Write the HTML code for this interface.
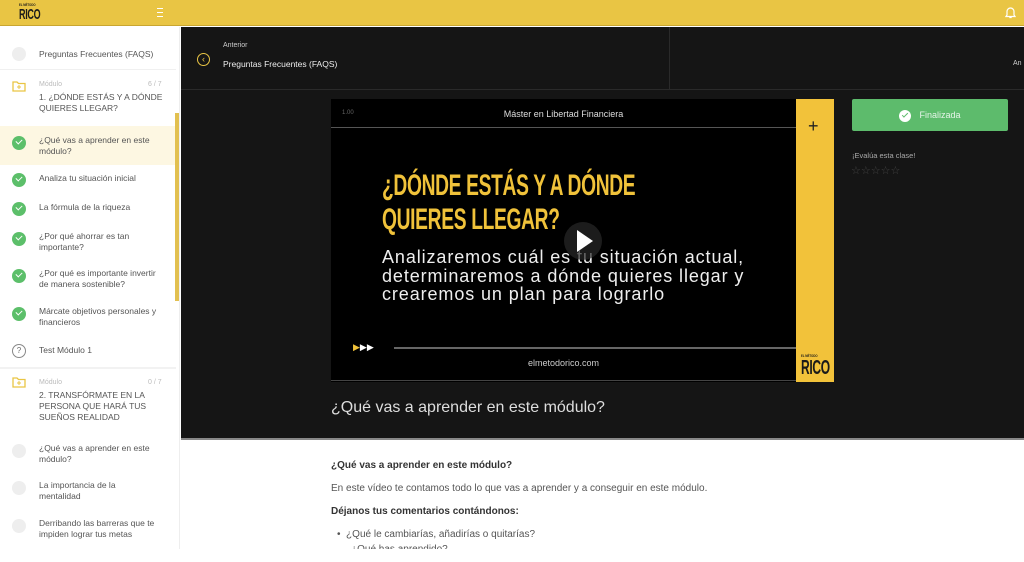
<!DOCTYPE html>
<html><head><meta charset="utf-8"><style>
*{margin:0;padding:0;box-sizing:border-box}
body{width:1024px;height:562px;overflow:hidden;background:#fff;font-family:"Liberation Sans",sans-serif;position:relative}
.top{position:absolute;left:0;top:0;width:1024px;height:26px;background:#e9c544;border-bottom:1px solid #c9a630}
.logo{position:absolute;left:19px;top:3px;color:#1a1a1a;font-weight:bold;line-height:1}
.side{position:absolute;left:0;top:27px;width:180px;height:522px;background:#fff;border-right:1px solid #eee}
.it{position:absolute;left:0;width:176px;font-size:8.5px;color:#555;line-height:11px}
.it span{position:absolute;left:39px;width:126px}
.ic{position:absolute;left:12px;width:14px;height:14px;border-radius:50%}
.ok{background:#5cbf6a}
.ok::after{content:"";position:absolute;left:4px;top:3px;width:5px;height:3px;border-left:1.6px solid #fff;border-bottom:1.6px solid #fff;transform:rotate(-45deg)}
.gr{background:#eee}
.main{position:absolute;left:181px;top:27px;width:843px;height:411px;background:#151515}
.sep{position:absolute;background:#2a2a2a}
.content{position:absolute;left:331px;top:455px;font-size:10px;color:#333}
.rlogo{font-weight:bold;line-height:1;color:#1a1a1a}
.rlogo b{display:block;font-size:15px;transform:scaleX(.6);transform-origin:left;letter-spacing:-.5px}
.rlogo i{display:block;font-style:normal;font-size:4px;transform:scaleX(.7);transform-origin:left}
</style></head><body>
<div class="top">
 <div class="logo rlogo"><i>EL MÉTODO</i><b>RICO</b></div>
 <div style="position:absolute;left:157px;top:8px;width:6px;height:9px;border-top:1.5px solid #fff;border-bottom:1.5px solid #fff"><div style="margin-top:2.5px;height:1.5px;background:#fff"></div></div>
 <svg style="position:absolute;left:1005px;top:6px" width="11" height="13" viewBox="0 0 11 13"><path d="M2 9V5.5a3.5 3.5 0 017 0V9l1 1.5H1z M4.3 11.5h2.4" fill="none" stroke="#fff" stroke-width="1.2"/></svg>
</div>
<div class="side">
 <div class="it" style="top:18px"><div class="ic gr" style="top:2px"></div><span style="top:4px;width:140px">Preguntas Frecuentes (FAQS)</span></div>
 <div style="position:absolute;left:0;top:42px;width:176px;height:1px;background:#f0f0f0"></div>
 <svg style="position:absolute;left:12px;top:53px" width="14" height="12"><path d="M1 2h4l1.5 1.5H13V11H1z" fill="none" stroke="#e9c544" stroke-width="1.3"/><path d="M7 5v4M5 7h4" stroke="#e9c544" stroke-width="1"/></svg>
 <div style="position:absolute;left:39px;top:54px;font-size:7px;color:#bbb">Módulo</div>
 <div style="position:absolute;left:148px;top:54px;font-size:7px;color:#bbb">6 / 7</div>
 <div class="it" style="top:65px"><span>1. ¿DÓNDE ESTÁS Y A DÓNDE QUIERES LLEGAR?</span></div>
 <div style="position:absolute;left:0;top:99px;width:176px;height:39px;background:#fdf7e2"></div>
 <div class="it" style="top:108px"><div class="ic ok" style="top:1px"></div><span>¿Qué vas a aprender en este módulo?</span></div>
 <div class="it" style="top:145px"><div class="ic ok" style="top:1px"></div><span style="top:1px">Analiza tu situación inicial</span></div>
 <div class="it" style="top:174px"><div class="ic ok" style="top:1px"></div><span style="top:1px">La fórmula de la riqueza</span></div>
 <div class="it" style="top:204px"><div class="ic ok" style="top:1px"></div><span>¿Por qué ahorrar es tan importante?</span></div>
 <div class="it" style="top:241px"><div class="ic ok" style="top:1px"></div><span>¿Por qué es importante invertir de manera sostenible?</span></div>
 <div class="it" style="top:279px"><div class="ic ok" style="top:1px"></div><span>Márcate objetivos personales y financieros</span></div>
 <div class="it" style="top:316px"><div class="ic" style="top:1px;border:1px solid #888;font-size:8px;text-align:center;line-height:12px;color:#666">?</div><span style="top:2px">Test Módulo 1</span></div>
 <div style="position:absolute;left:0;top:340px;width:176px;height:2px;background:#f2f2f2"></div>
 <svg style="position:absolute;left:12px;top:349px" width="14" height="12"><path d="M1 2h4l1.5 1.5H13V11H1z" fill="none" stroke="#e9c544" stroke-width="1.3"/><path d="M7 5v4M5 7h4" stroke="#e9c544" stroke-width="1"/></svg>
 <div style="position:absolute;left:39px;top:352px;font-size:7px;color:#bbb">Módulo</div>
 <div style="position:absolute;left:148px;top:352px;font-size:7px;color:#bbb">0 / 7</div>
 <div class="it" style="top:363px"><span>2. TRANSFÓRMATE EN LA PERSONA QUE HARÁ TUS SUEÑOS REALIDAD</span></div>
 <div class="it" style="top:416px"><div class="ic gr" style="top:1px"></div><span>¿Qué vas a aprender en este módulo?</span></div>
 <div class="it" style="top:453px"><div class="ic gr" style="top:1px"></div><span style="width:95px">La importancia de la mentalidad</span></div>
 <div class="it" style="top:491px"><div class="ic gr" style="top:1px"></div><span>Derribando las barreras que te impiden lograr tus metas</span></div>
 <div style="position:absolute;left:175px;top:86px;width:4px;height:188px;background:#e2c050"></div>
</div>
<div class="main">
 <div class="sep" style="left:0;top:62px;width:843px;height:1px"></div>
 <div class="sep" style="left:488px;top:0;width:1px;height:62px"></div>
 <div style="position:absolute;left:16px;top:26px;width:13px;height:13px;border:1.3px solid #e9c544;border-radius:50%;color:#e9c544;font-size:9px;line-height:10px;text-align:center">‹</div>
 <div style="position:absolute;left:42px;top:15px;font-size:7px;color:#ccc">Anterior</div>
 <div style="position:absolute;left:42px;top:32px;font-size:8.5px;color:#eee">Preguntas Frecuentes (FAQS)</div>
 <div style="position:absolute;left:832px;top:33px;font-size:7px;color:#ccc">An</div>
 <div style="position:absolute;left:150px;top:72px;width:465px;height:283px;background:#000">
  <div style="position:absolute;left:11px;top:11px;font-size:6px;color:#666">1.00</div>
  <div style="position:absolute;left:0;width:465px;top:10px;text-align:center;font-size:9px;color:#ddd">Máster en Libertad Financiera</div>
  <div style="position:absolute;left:0;top:28px;width:465px;height:1px;background:#555"></div>
  <div style="position:absolute;left:51px;top:70px;font-weight:bold;font-size:30px;line-height:34px;color:#f0c23a;transform:scaleX(.64);transform-origin:left;white-space:nowrap;letter-spacing:-.5px">¿DÓNDE ESTÁS Y A DÓNDE<br>QUIERES LLEGAR?</div>
  <div style="position:absolute;left:51px;top:149px;font-size:18px;line-height:18.5px;color:#eee;white-space:nowrap;letter-spacing:.9px">Analizaremos cuál es tu situación actual,<br>determinaremos a dónde quieres llegar y<br>crearemos un plan para lograrlo</div>
  <div style="position:absolute;left:233px;top:123px;width:38px;height:38px;border-radius:50%;background:rgba(40,40,40,.7)"></div>
  <div style="position:absolute;left:246px;top:131px;width:0;height:0;border-left:16px solid #fff;border-top:11px solid transparent;border-bottom:11px solid transparent"></div>
  <div style="position:absolute;left:22px;top:243px;font-size:9px;color:#fff;letter-spacing:0"><span style="color:#f0c23a">▶</span>▶▶</div>
  <div style="position:absolute;left:63px;top:248px;width:402px;height:2px;background:#666"></div>
  <div style="position:absolute;left:0;width:465px;top:259px;text-align:center;font-size:9px;color:#ccc">elmetodorico.com</div>
  <div style="position:absolute;left:0;top:281px;width:465px;height:1px;background:#444"></div>
 </div>
 <div style="position:absolute;left:615px;top:72px;width:38px;height:283px;background:#f2c23a">
  <div style="position:absolute;left:12px;top:18px;font-size:18px;line-height:18px;color:#222">+</div>
  <div class="rlogo" style="position:absolute;left:5px;top:255px"><i>EL MÉTODO</i><b style="font-size:20px">RICO</b></div>
 </div>
 <div style="position:absolute;left:671px;top:72px;width:156px;height:32px;background:#5dbb6c;border-radius:2px;color:#e6f5e8;font-size:9px;line-height:32px;text-align:center"><span style="display:inline-block;width:12px;height:12px;border-radius:50%;background:#fff;vertical-align:middle;margin-right:8px;position:relative"><span style="position:absolute;left:3px;top:3px;width:6px;height:3px;border-left:1.5px solid #5dbb6c;border-bottom:1.5px solid #5dbb6c;transform:rotate(-45deg)"></span></span>Finalizada</div>
 <div style="position:absolute;left:671px;top:124px;font-size:7.5px;color:#aaa">¡Evalúa esta clase!</div>
 <div style="position:absolute;left:670px;top:137px;font-size:11px;color:#444;letter-spacing:0">☆☆☆☆☆</div>
 <div style="position:absolute;left:150px;top:372px;font-size:16px;color:#ddd">¿Qué vas a aprender en este módulo?</div>
</div>
<div style="position:absolute;left:181px;top:438px;width:843px;height:2px;background:#888"></div>
<div class="content">
 <div style="position:absolute;top:5px;font-weight:bold;white-space:nowrap">¿Qué vas a aprender en este módulo?</div>
 <div style="position:absolute;top:28px;white-space:nowrap;color:#555">En este vídeo te contamos todo lo que vas a aprender y a conseguir en este módulo.</div>
 <div style="position:absolute;top:51px;font-weight:bold;white-space:nowrap">Déjanos tus comentarios contándonos:</div>
 <div style="position:absolute;top:74px;left:6px;white-space:nowrap;color:#555">•&nbsp;&nbsp;¿Qué le cambiarías, añadirías o quitarías?</div>
 <div style="position:absolute;top:89px;left:20px;white-space:nowrap;color:#555;height:5px;overflow:hidden">¿Qué has aprendido?</div>
</div>
</body></html>
